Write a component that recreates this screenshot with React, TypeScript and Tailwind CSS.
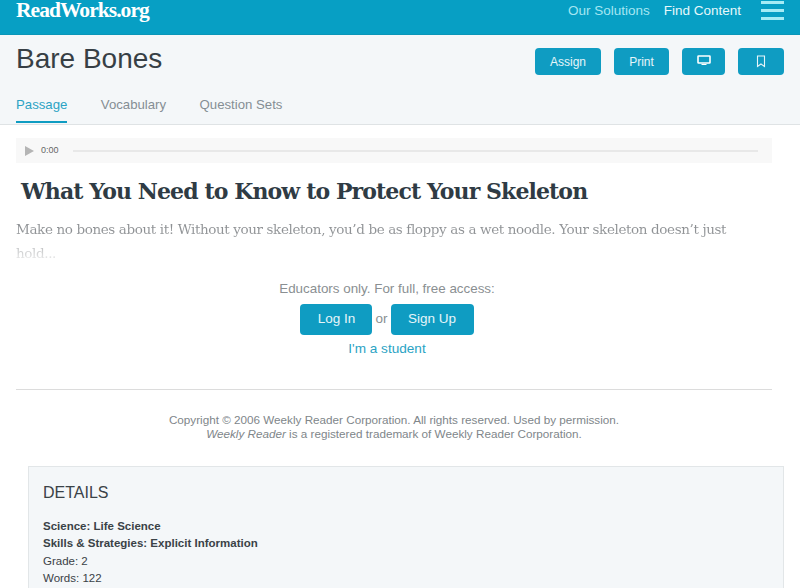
import React from 'react';

const sans = { fontFamily: '"Liberation Sans", Arial, sans-serif' };

const App: React.FC = () => {
  return (
    <div className="h-[588px] overflow-hidden bg-white font-['Liberation_Sans',Arial,sans-serif]">
      {/* top bar */}
      <div className="h-[35px] bg-[#079fc4] border-b border-[#0a96b8] flex items-start justify-between pl-4 pr-4">
        <div className="font-['Liberation_Serif',serif] font-bold text-white text-[21.5px] leading-[21px] tracking-[-0.95px]">
          ReadWorks.org
        </div>
        <div className="flex items-start">
          <span className="text-[13.5px] leading-[22px] text-[#a5e6f2]">Our Solutions</span>
          <span className="ml-[14px] text-[13.5px] leading-[22px] text-[#e6f8fb]">Find Content</span>
          <div className="ml-5 mt-[1px] w-[23px] flex flex-col gap-[5px]">
            <div className="h-[3px] bg-[#a5ecf5]" />
            <div className="h-[3px] bg-[#a5ecf5]" />
            <div className="h-[3px] bg-[#a5ecf5]" />
          </div>
        </div>
      </div>

      {/* title area */}
      <div className="h-[90px] bg-[#f4f7f9] border-b border-[#dfe3e5] px-4 flex flex-col">
        <div className="flex justify-between pt-[13px]">
          <h1 className="text-[28px] leading-[24px] mt-[-1px] text-[#373f45]">Bare Bones</h1>
          <div className="flex gap-[13px]">
            <button className="w-[66px] h-[27px] rounded-[4px] bg-[#0f9cc2] text-white/90 text-[12px]">Assign</button>
            <button className="w-[55px] h-[27px] rounded-[4px] bg-[#0f9cc2] text-white/90 text-[12px]">Print</button>
            <button className="w-[43px] h-[27px] rounded-[4px] bg-[#0f9cc2] text-white flex items-center justify-center pb-[3px]">
              <svg width="14" height="11" viewBox="0 0 14 11" fill="none">
                <rect x="1" y="1" width="12" height="7" rx="0.5" stroke="currentColor" strokeWidth="1.6" />
                <path d="M4.5 10h5V9h-5z" fill="currentColor" />
              </svg>
            </button>
            <button className="w-[46px] h-[27px] rounded-[4px] bg-[#0f9cc2] text-white/90 flex items-center justify-center">
              <svg width="10" height="13" viewBox="0 0 10 13" fill="none">
                <path d="M1.5 1h7v10.5L5 9l-3.500 2.500z" stroke="currentColor" strokeWidth="1.1" />
              </svg>
            </button>
          </div>
        </div>
        <div className="flex gap-[33.5px] mt-[22px] text-[13.2px] leading-[16px] text-[#858e94]">
          <span className="h-[26px] text-[#2ba3c4] border-b-2 border-[#0f9cc2]">Passage</span>
          <span>Vocabulary</span>
          <span>Question Sets</span>
        </div>
      </div>

      {/* passage */}
      <div className="px-4 pt-[13px]">
        <div className="w-[756px] h-[25px] bg-[#f8f8f8] flex items-center pl-[9px] pr-[14px]">
          <div className="w-0 h-0 border-y-[5px] border-y-transparent border-l-[9px] border-l-[#b5b5b5]" />
          <span className="ml-[7px] text-[9px] text-[#666]">0:00</span>
          <div className="ml-[14px] flex-1 h-[2px] bg-[#e8e8e8]" />
        </div>

        <h2 className="mt-[12px] ml-[5px] font-['DejaVu_Serif',serif] font-bold text-[22px] leading-[32px] text-[#2f3b44] tracking-[-0.9px]">
          What You Need to Know to Protect Your Skeleton
        </h2>

        <p className="mt-[10px] w-[756px] h-[46px] overflow-hidden font-['DejaVu_Serif',serif] text-[13.5px] leading-[24px] tracking-[-0.38px] text-transparent bg-clip-text bg-gradient-to-b from-[#8e9194] from-30% to-[#f4f4f4]">
          Make no bones about it! Without your skeleton, you’d be as floppy as a wet noodle. Your skeleton doesn’t just<br />hold...
        </p>

        <div className="w-[742px] mt-[16px] flex flex-col items-center" style={sans}>
          <div className="text-[13.4px] leading-[20px] text-[#8a8f92]">Educators only. For full, free access:</div>
          <div className="mt-[5px] flex items-center gap-[3px] text-[13.5px]">
            <button className="w-[72px] h-[31px] rounded-[4px] bg-[#0f9cc2] text-white/90">Log In</button>
            <span className="text-[#8a8f92]">or</span>
            <button className="w-[83px] h-[31px] rounded-[4px] bg-[#0f9cc2] text-white/90">Sign Up</button>
          </div>
          <div className="mt-[4px] text-[13.6px] leading-[20px] text-[#2ba3c4]">I'm a student</div>
        </div>

        <div className="w-[756px] mt-[30px] border-t border-[#dcdcdc] pt-[23px] text-center text-[11.7px] leading-[14px] text-[#80868a]">
          <div>Copyright © 2006 Weekly Reader Corporation. All rights reserved. Used by permission.</div>
          <div><em>Weekly Reader</em> is a registered trademark of Weekly Reader Corporation.</div>
        </div>

        <div className="ml-3 mt-[25px] w-[756px] h-[140px] bg-[#f4f7f9] border border-[#e2e6e8] px-[14px] pt-[16px]">
          <div className="text-[16px] leading-[20px] text-[#3a4247]">DETAILS</div>
          <div className="mt-[15px] text-[11.5px] leading-[17.33px] text-[#3a4247]">
            <div className="font-bold">Science: Life Science</div>
            <div className="font-bold">Skills &amp; Strategies: Explicit Information</div>
            <div>Grade: 2</div>
            <div>Words: 122</div>
          </div>
        </div>
      </div>
    </div>
  );
};

export default App;
